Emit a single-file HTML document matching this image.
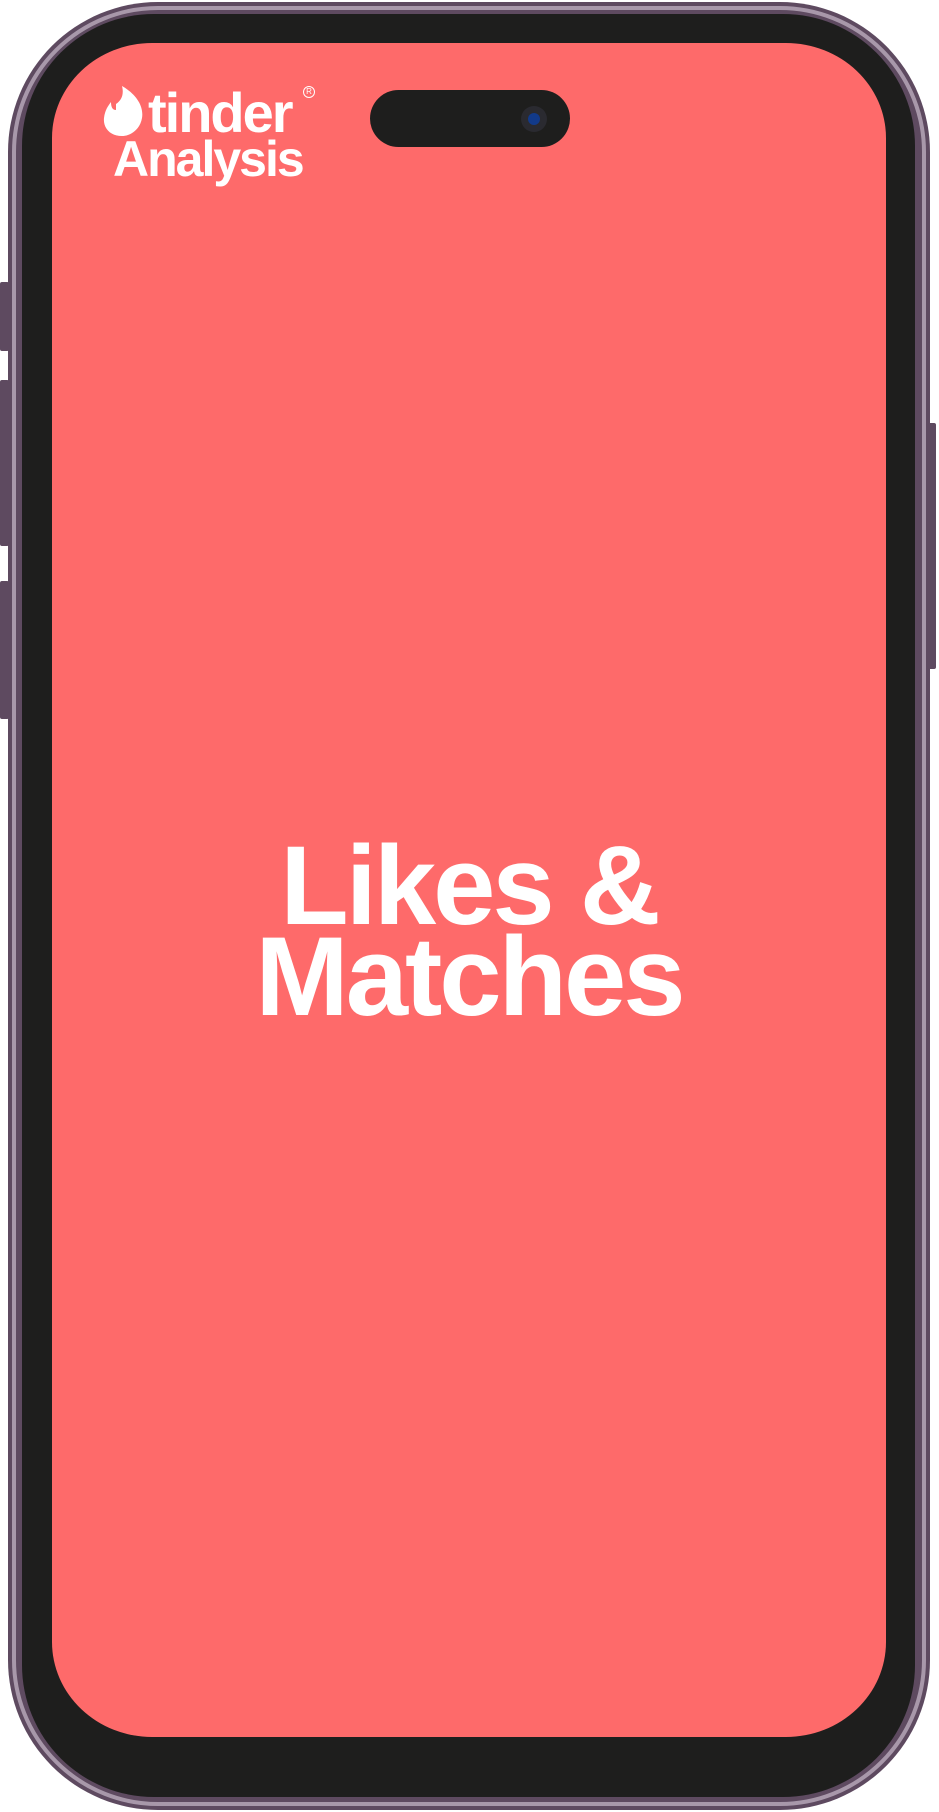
<!DOCTYPE html>
<html><head><meta charset="utf-8"><style>
html,body{margin:0;padding:0;background:#fff;width:939px;height:1812px;overflow:hidden;position:relative;font-family:"Liberation Sans",sans-serif}
.abs{position:absolute}
.frame{left:8px;top:2px;width:922px;height:1808px;border-radius:150px;background:#5e4a60;box-sizing:border-box}
.band{left:12px;top:6px;width:914px;height:1800px;border-radius:146px;border:4px solid #a898aa;box-sizing:border-box}
.inner{left:17px;top:11px;width:904px;height:1790px;border-radius:140px;background:#5e4a60}
.bezel{left:22px;top:14px;width:893px;height:1783px;border-radius:132px;background:#1e1e1d}
.screen{left:52px;top:43px;width:834px;height:1694px;border-radius:100px/95px;background:#fe6a6a}
.btn{background:#5e4a60;border-radius:2px}
.pill{left:370px;top:90px;width:200px;height:57px;border-radius:29px;background:#1e1e1d}
.cam{left:521px;top:106px;width:26px;height:26px;border-radius:50%;background:#2a2a30}
.cam i{position:absolute;left:7px;top:7px;width:12px;height:12px;border-radius:50%;background:#123a8a}
.title{left:52px;width:834px;top:840px;text-align:center;color:#fff;font-weight:bold;font-size:112px;line-height:91px;letter-spacing:-3px}
.t1{left:148px;top:80px;color:#fff;font-weight:bold;font-size:56px;letter-spacing:-2px;font-family:"Liberation Sans Narrow","Liberation Sans",sans-serif}
.t2{left:113px;top:130px;color:#fff;font-weight:bold;font-size:50px;letter-spacing:-2px;font-family:"Liberation Sans Narrow","Liberation Sans",sans-serif}
</style></head><body>
<div class="abs btn" style="left:0;top:282px;width:9px;height:69px"></div>
<div class="abs btn" style="left:0;top:380px;width:9px;height:166px"></div>
<div class="abs btn" style="left:0;top:581px;width:9px;height:138px"></div>
<div class="abs btn" style="left:926px;top:423px;width:10px;height:246px"></div>
<div class="abs frame"></div>
<div class="abs band"></div>
<div class="abs inner"></div>
<div class="abs bezel"></div>
<div class="abs screen"></div>
<div class="abs pill"></div>
<div class="abs cam"><i></i></div>
<svg class="abs" style="left:102px;top:86px" width="44" height="50" viewBox="0 0 44 50"><path d="M14 18 C20 14 22 8 20 0 C34 8 42 20 40 32 C38 44 28 50 20 50 C8 50 1 42 2 32 C3 24 6 20 9 16 C9 22 11 24 14 24 Z" fill="#fff"/></svg>
<div class="abs t1">tinder</div>
<div class="abs" style="left:303px;top:86px;color:#fff;border:1.5px solid #fff;border-radius:50%;width:10px;height:10px;line-height:10px;text-align:center;font-size:8px">R</div>
<div class="abs t2">Analysis</div>
<div class="abs title">Likes &amp;<br>Matches</div>
</body></html>
